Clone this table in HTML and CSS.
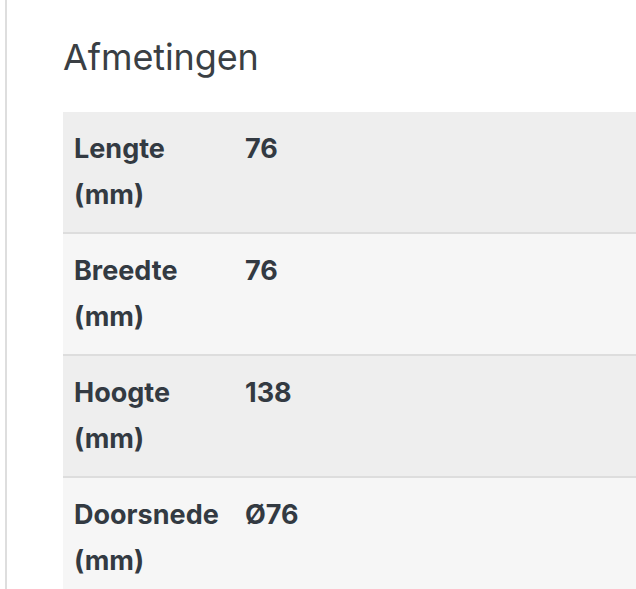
FILE: index.html
```html
<!DOCTYPE html>
<html lang="nl">
<head>
<meta charset="utf-8">
<link rel="stylesheet" href="styles.css">
</head>
<body>
<div class="page">
  <div class="rule"></div>
  <main class="content">
    <h2 class="title">Afmetingen</h2>
    <table class="specs">
      <tbody>
        <tr><th>Lengte (mm)</th><td>76</td></tr>
        <tr><th>Breedte (mm)</th><td>76</td></tr>
        <tr><th>Hoogte (mm)</th><td>138</td></tr>
        <tr><th>Doorsnede (mm)</th><td>Ø76</td></tr>
      </tbody>
    </table>
  </main>
</div>
</body>
</html>
```
FILE: styles.css
```css
html, body {
  margin: 0;
  padding: 0;
  background: #ffffff;
  font-family: Inter, "Open Sans", "Liberation Sans", sans-serif;
  color: #333a42;
  overflow: hidden;
}
.page {
  display: flex;
  height: 589px;
}
.rule {
  width: 2px;
  margin-left: 5px;
  background: #dedede;
  flex: none;
}
.content {
  flex: 1;
  padding-left: 56px;
  min-width: 0;
}
.title {
  margin: 36px 0 0 0;
  font-size: 36px;
  font-weight: 400;
  line-height: 42px;
  color: #3a3f44;
  letter-spacing: -0.1px;
}
.specs {
  margin-top: 34px;
  width: 600px;
  border-collapse: collapse;
}
.specs tr {
  border-bottom: 2px solid #dddddd;
}
.specs tr:nth-child(odd) { background: #eeeeee; }
.specs tr:nth-child(even) { background: #f6f6f6; }
.specs th, .specs td {
  text-align: left;
  vertical-align: top;
  font-size: 27px;
  font-weight: 700;
  line-height: 46px;
  padding: 14px 11px 14px 11px;
}
.specs th {
  width: 149px;
}
.specs td {
  padding-left: 11px;
}
```
